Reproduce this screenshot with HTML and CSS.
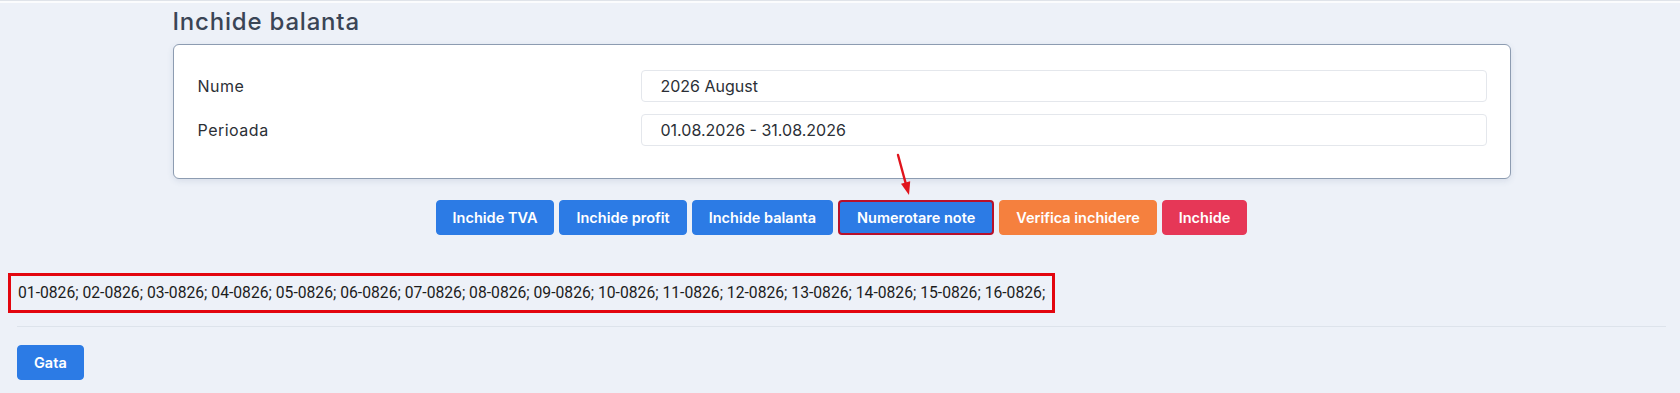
FILE: index.html
```html
<!DOCTYPE html>
<html lang="ro">

<head>
    <meta charset="UTF-8">
    <meta name="viewport" content="width=device-width, initial-scale=1.0">
    <title>Inchide balanta</title>
    <link rel="stylesheet" href="styles.css">
</head>

<body>
    <div class="topbar"></div>

    <div class="content">
        <div class="panel">
            <h2 class="title">Inchide balanta</h2>
            <div class="card">
                <div class="row">
                    <label class="label">Nume</label>
                    <input class="field" type="text" value="2026 August" readonly>
                </div>
                <div class="row">
                    <label class="label">Perioada</label>
                    <input class="field" type="text" value="01.08.2026 - 31.08.2026" readonly>
                </div>
            </div>
        </div>

        <div class="actions">
            <button class="btn btn-blue">Inchide TVA</button>
            <button class="btn btn-blue">Inchide profit</button>
            <button class="btn btn-blue">Inchide balanta</button>
            <button class="btn btn-blue marked">
                Numerotare note
                <svg class="arrow" width="22" height="46" viewBox="0 0 22 46">
                    <line x1="6" y1="3" x2="13.6" y2="31" stroke="#e0141c" stroke-width="2.4" stroke-linecap="round"/>
                    <polygon points="17,43 18.2,29.2 9,31.8" fill="#e0141c"/>
                </svg>
            </button>
            <button class="btn btn-orange">Verifica inchidere</button>
            <button class="btn btn-red">Inchide</button>
        </div>

        <div class="codes">01-0826; 02-0826; 03-0826; 04-0826; 05-0826; 06-0826; 07-0826; 08-0826; 09-0826; 10-0826; 11-0826; 12-0826; 13-0826; 14-0826; 15-0826; 16-0826;</div>

        <hr class="sep">

        <button class="btn btn-blue">Gata</button>
    </div>
</body>

</html>
```

FILE: styles.css
```css
body {
    margin: 0;
    padding: 0;
    background-color: #edf1f8;
    font-family: "Inter", "Noto Sans", sans-serif;
    color: #344050;
}

.topbar {
    height: 2px;
    background-color: #fbfcfd;
    border-top: 1px solid #dfe3e9;
}

.content {
    padding: 0 14px 20px 17px;
}

.panel {
    width: 1338px;
    margin: 0 auto;
}

.title {
    margin: 0;
    padding-top: 4px;
    font-size: 24px;
    font-weight: 500;
    line-height: 30px;
    letter-spacing: 0.8px;
    color: #3a4556;
}

.card {
    margin-top: 7px;
    background-color: #fff;
    border: 1px solid #8d9cb1;
    border-radius: 6px;
    box-shadow: 0 2px 6px rgba(60, 80, 120, 0.12);
    padding: 25px 23px 32px 24px;
}

.row {
    display: flex;
    align-items: center;
}

.row + .row {
    margin-top: 12px;
}

.label {
    width: 443px;
    flex-shrink: 0;
    font-size: 16px;
    letter-spacing: 0.5px;
    color: #2b2f36;
}

.field {
    flex: 1;
    height: 32px;
    box-sizing: border-box;
    border: 1px solid #e4e7ec;
    border-radius: 4px;
    padding: 0 19px;
    font-family: inherit;
    font-size: 16px;
    color: #2b2f36;
    background-color: #fff;
    outline: none;
}

.actions {
    display: flex;
    justify-content: center;
    gap: 5px;
    margin-top: 21px;
}

.btn {
    height: 35px;
    box-sizing: border-box;
    padding: 0 16px;
    border: 1px solid transparent;
    border-radius: 4px;
    font-family: inherit;
    font-size: 14.5px;
    font-weight: 600;
    color: #fff;
    cursor: pointer;
}

.btn-blue {
    background-color: #2c7be5;
    border-color: #2c7be5;
}

.btn-orange {
    background-color: #f5803e;
    border-color: #f5803e;
}

.btn-red {
    background-color: #e63757;
    border-color: #e63757;
}

.marked {
    position: relative;
    border: 2.5px solid #b8102a;
    padding: 0 17px;
}

.arrow {
    position: absolute;
    left: 52px;
    top: -50px;
}

.codes {
    display: inline-block;
    margin: 38px 0 0 -9px;
    padding: 7px 7px;
    border: 3px solid #e3060f;
    font-family: "Roboto", "Liberation Sans", sans-serif;
    font-size: 15.7px;
    line-height: 20px;
    color: #1c1c1c;
}

.sep {
    margin: 13px 0 18px 0;
    border: none;
    border-top: 1px solid #dde3eb;
}
```
